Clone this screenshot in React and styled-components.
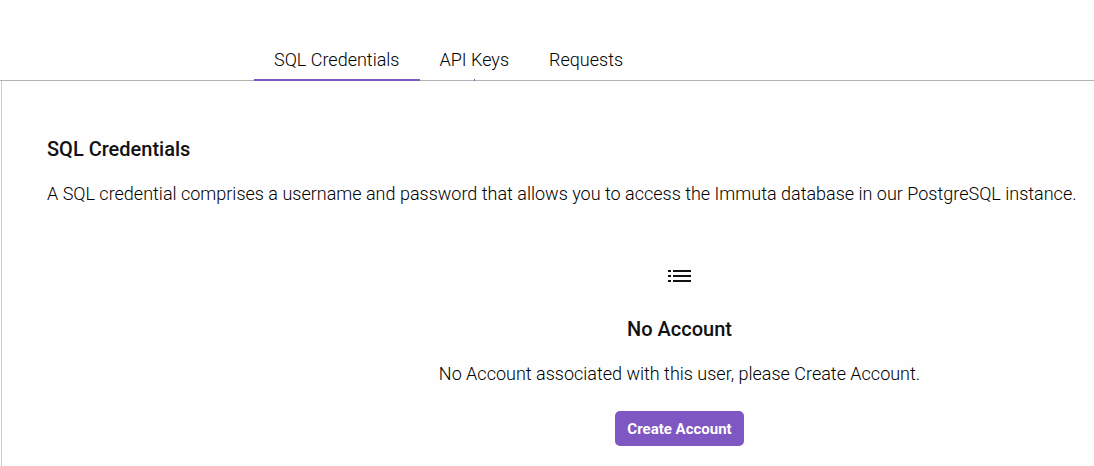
import React from 'react';
import styled, { createGlobalStyle, css } from 'styled-components';

const GlobalStyle = createGlobalStyle`
  *, *::before, *::after { box-sizing: border-box; }
  body {
    margin: 0;
    background: #fefefe;
    color: #000;
    font-family: Roboto, 'Liberation Sans', sans-serif;
    font-size: 18px;
    font-weight: 300;
    line-height: 24px;
  }
`;

const Page = styled.div`
  min-height: 100vh;
  display: flex;
  flex-direction: column;
`;

const TabBar = styled.nav`
  display: flex;
  padding: 48px 0 0 254px;
  border-bottom: 1px solid #b3b3b3;
`;

const Tab = styled.a`
  position: relative;
  padding: 0 20px 9px;
  margin-bottom: -1px;
  color: inherit;
  text-decoration: none;
  white-space: nowrap;

  &::after {
    content: '';
    position: absolute;
    bottom: 0;
    height: 2px;
    background: #7e57c2;
    ${({ $marker }) =>
      $marker === 'full' &&
      css`
        left: 0;
        right: 0;
      `}
    ${({ $marker }) =>
      $marker === 'dot' &&
      css`
        left: 50%;
        width: 1px;
      `}
  }
`;

const Panel = styled.main`
  flex: 1;
  margin-left: 1px;
  padding: 56px 12px 20px 45px;
  border-left: 1px solid #ccc;
`;

const Heading = styled.h2`
  margin: 0;
  color: #111;
  font-size: 20px;
  font-weight: 500;
  line-height: 24px;
`;

const Text = styled.p`
  margin: 21px 0 0;
`;

const EmptyState = styled.section`
  display: flex;
  flex-direction: column;
  align-items: center;
  margin: 58px -12px 0 218px;
  text-align: center;
`;

const ListIcon = styled.svg`
  width: 31px;
  height: 24px;
  margin-bottom: 29px;
`;

const Button = styled.button`
  height: 35px;
  margin-top: 25px;
  padding: 0 12px;
  border: 0;
  border-radius: 5px;
  background: #7e57c2;
  color: #fff;
  font: 700 15px/20px Roboto, 'Liberation Sans', sans-serif;
  cursor: pointer;
`;

export default function App() {
  return (
    <Page>
      <GlobalStyle />
      <TabBar>
        <Tab href="#sql" $marker="full" aria-current="page">SQL Credentials</Tab>
        <Tab href="#keys" $marker="dot">API Keys</Tab>
        <Tab href="#requests">Requests</Tab>
      </TabBar>
      <Panel>
        <Heading>SQL Credentials</Heading>
        <Text>
          A SQL credential comprises a username and password that allows you to access the Immuta
          database in our PostgreSQL instance.
        </Text>
        <EmptyState>
          <ListIcon viewBox="0 0 31 24" aria-hidden="true" fill="#111">
            <path d="M4 6h3v2H4zM9 6h18v2H9zM4 11h3v2H4zM9 11h18v2H9zM4 16h3v2H4zM9 16h18v2H9z" />
          </ListIcon>
          <Heading>No Account</Heading>
          <Text>No Account associated with this user, please Create Account.</Text>
          <Button type="button">Create Account</Button>
        </EmptyState>
      </Panel>
    </Page>
  );
}
